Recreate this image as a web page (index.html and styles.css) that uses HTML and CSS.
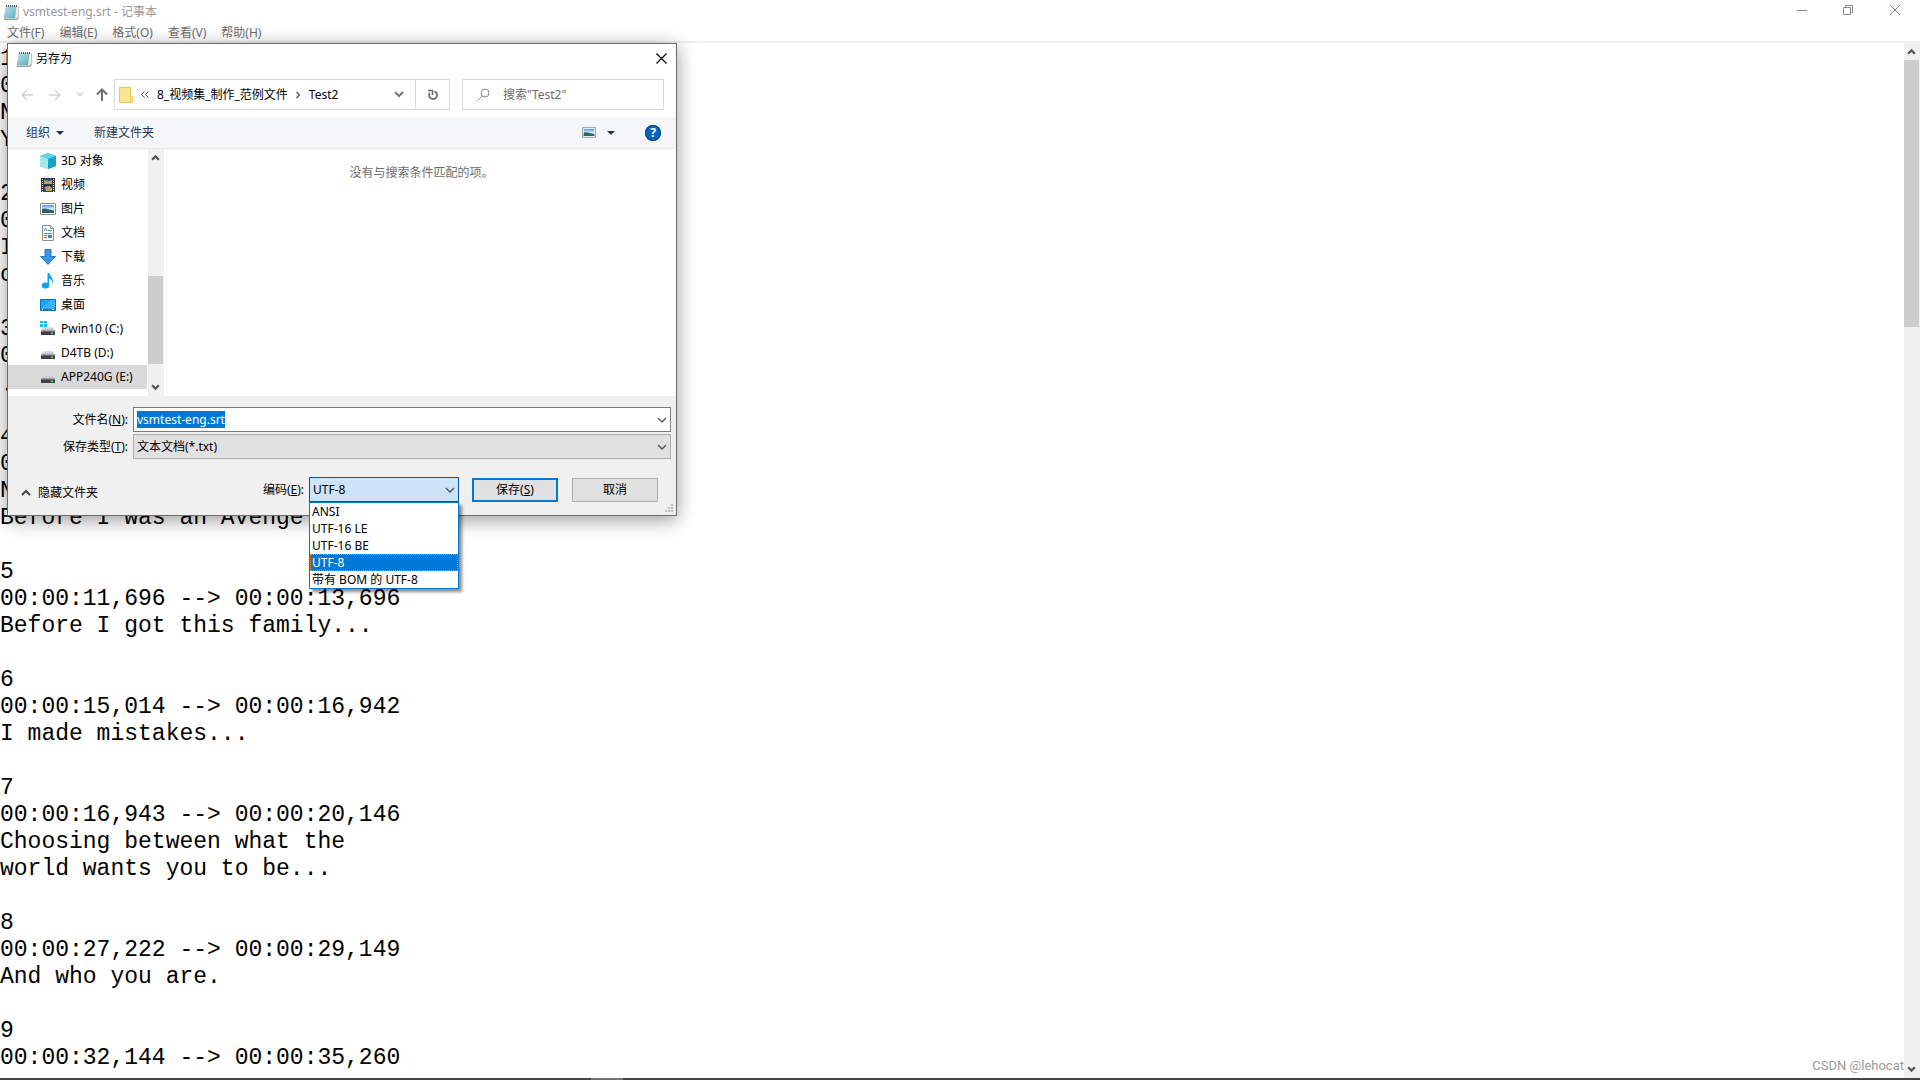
FILE: index.html
```
<!DOCTYPE html>
<html lang="zh-CN">
<head>
  <meta charset="UTF-8" />
  <meta name="viewport" content="width=device-width, initial-scale=1" />
  <title>vsmtest-eng.srt - 记事本</title>
  <link rel="stylesheet" href="styles.css">
</head>
<body>
  <!-- shared icons -->
  <svg class="sprite" width="0" height="0" aria-hidden="true">
    <defs>
      <linearGradient id="pad" x1="0" y1="0" x2="1" y2="1">
        <stop offset="0" stop-color="#c4e6ee" />
        <stop offset="1" stop-color="#57a9bd" />
      </linearGradient>
      <linearGradient id="sky" x1="0" y1="0" x2="0" y2="1">
        <stop offset="0" stop-color="#4f94ef" />
        <stop offset="0.5" stop-color="#d8f0fa" />
        <stop offset="1" stop-color="#2c6c78" />
      </linearGradient>
      <linearGradient id="disk" x1="0" y1="0" x2="0" y2="1">
        <stop offset="0" stop-color="#e2e2e4" />
        <stop offset="1" stop-color="#b5b6ba" />
      </linearGradient>
      <symbol id="notepad" viewBox="0 0 16 16">
        <path d="M3 2h12.500v12.500L13.500 16H1z" fill="#a89878" />
        <path d="M4 2h11v11l-2 2H2z" fill="#eceae2" />
        <path d="M3 2h10.500L12 14.500H.5z" fill="url(#pad)" />
        <path d="M3.200 5h9.500M2.800 8h9.500M2.300 11h9.500" stroke="#8cc9d6" stroke-width=".6" />
        <path d="M3.500 1v2M5.500 1v2M7.500 1v2M9.500 1v2M11.500 1v2M13.500 1v2" stroke="#53626a" />
      </symbol>
      <symbol id="chevron-up" viewBox="0 0 8 6"><path d="M1 5l3-3 3 3" fill="none" stroke="#555" stroke-width="2" /></symbol>
      <symbol id="chevron-down" viewBox="0 0 8 6"><path d="M1 1l3 3 3-3" fill="none" stroke="#555" stroke-width="2" /></symbol>
      <symbol id="thin-down" viewBox="0 0 10 6"><path d="M1 1l4 4 4-4" fill="none" stroke="#555" stroke-width="1.300" /></symbol>
      <symbol id="caret" viewBox="0 0 8 4"><path d="M0 0h8L4 4z" fill="#1e395b" /></symbol>
      <symbol id="picture" viewBox="0 0 16 12">
        <path d="M.5.5h15v11H.5z" fill="#fff" stroke="#8c8c8c" />
        <path d="M2 2h12v8H2z" fill="url(#sky)" />
        <path d="M2 6c3-1 5 0 12 2v2H2z" fill="#2a6265" />
      </symbol>
      <symbol id="drive" viewBox="0 0 16 16">
        <path d="M3.500 6h9L15 10H1z" fill="url(#disk)" />
        <path d="M1 10h14v4H1z" fill="#3f4145" />
        <path d="M1 9.500h14v1H1z" fill="#8b8d92" />
        <path d="M11 11.500h2v1.500h-2z" fill="#52e07a" />
      </symbol>
    </defs>
  </svg>

  <header class="title-bar">
    <svg class="icon"><use href="#notepad" /></svg>
    <h1 class="app-title">vsmtest-eng.srt - 记事本</h1>
    <div class="window-buttons">
      <button class="window-btn" aria-label="最小化">
        <svg width="10" height="10"><path d="M0 5.500h10" stroke="#888" /></svg>
      </button>
      <button class="window-btn" aria-label="还原">
        <svg width="10" height="10"><path d="M.5 2.500h7v7h-7zM2.500 2.500v-2h7v7h-2" fill="none" stroke="#888" /></svg>
      </button>
      <button class="window-btn" aria-label="关闭">
        <svg width="10" height="10"><path d="M0 0l10 10M10 0L0 10" stroke="#888" /></svg>
      </button>
    </div>
  </header>

  <nav class="menu-bar">
    <button class="menu-btn">文件(F)</button>
    <button class="menu-btn">编辑(E)</button>
    <button class="menu-btn">格式(O)</button>
    <button class="menu-btn">查看(V)</button>
    <button class="menu-btn">帮助(H)</button>
  </nav>

  <main class="editor">
    <div class="text">
      <p class="cue">1<br>0<br>N<br>Y</p>
      <p class="cue">2<br>0<br>I<br>c</p>
      <p class="cue">3<br>0<br><span class="note">♪</span></p>
      <p class="cue">4<br>0<br>N<br>Before I was an Avenge</p>
      <p class="cue">5<br>00:00:11,696 --&gt; 00:00:13,696<br>Before I got this family...</p>
      <p class="cue">6<br>00:00:15,014 --&gt; 00:00:16,942<br>I made mistakes...</p>
      <p class="cue">7<br>00:00:16,943 --&gt; 00:00:20,146<br>Choosing between what the<br>world wants you to be...</p>
      <p class="cue">8<br>00:00:27,222 --&gt; 00:00:29,149<br>And who you are.</p>
      <p class="cue">9<br>00:00:32,144 --&gt; 00:00:35,260</p>
    </div>
    <div class="scrollbar">
      <svg class="scroll-arrow"><use href="#chevron-up" /></svg>
      <div class="thumb editor-thumb"></div>
      <svg class="scroll-arrow"><use href="#chevron-down" /></svg>
    </div>
    <span class="watermark">CSDN @lehocat</span>
  </main>
  <footer class="taskbar"><div class="task-active"></div></footer>

  <section class="dialog" role="dialog" aria-labelledby="dialog-title">
    <div class="dialog-head">
      <svg class="icon"><use href="#notepad" /></svg>
      <h2 class="dialog-title" id="dialog-title">另存为</h2>
      <button class="close-btn" aria-label="关闭">
        <svg width="11" height="11"><path d="M.5.5l10 10M10.500.5l-10 10" stroke="#000" stroke-width="1.200" /></svg>
      </button>
    </div>

    <div class="path-row">
      <div class="arrows">
        <button class="plain-btn" aria-label="后退">
          <svg width="12" height="12"><path d="M12 6H1M6 1L1 6l5 5" fill="none" stroke="#d4d4d4" stroke-width="1.500" /></svg>
        </button>
        <button class="plain-btn" aria-label="前进">
          <svg width="12" height="12"><path d="M0 6h11M6 1l5 5-5 5" fill="none" stroke="#d4d4d4" stroke-width="1.500" /></svg>
        </button>
        <button class="plain-btn" aria-label="最近的位置">
          <svg width="6" height="5"><path d="M.5 1L3 3.500 5.500 1" fill="none" stroke="#ccc" stroke-width="1.300" /></svg>
        </button>
        <button class="plain-btn" aria-label="上移">
          <svg width="12" height="13"><path d="M6 13V1.500M1 6.500l5-5 5 5" fill="none" stroke="#6e6e6e" stroke-width="2" /></svg>
        </button>
      </div>
      <div class="address">
        <svg width="14" height="18"><path d="M.5 1.500h11v9h2v6H.5z" fill="#ffe48f" stroke="#ecc455" /><path d="M11.500 10.500v6" stroke="#f4cf67" /></svg>
        <svg width="8" height="7"><path d="M3.500.5l-3 3 3 3M7.500.5l-3 3 3 3" fill="none" stroke="#555" /></svg>
        <button class="crumb">8_视频集_制作_范例文件</button>
        <svg width="5" height="8"><path d="M.5 1l3 3-3 3" fill="none" stroke="#555" stroke-width="1.300" /></svg>
        <button class="crumb">Test2</button>
        <button class="address-drop" aria-label="以前的位置"><svg width="10" height="7"><path d="M1 1l4 4 4-4" fill="none" stroke="#777" stroke-width="2" /></svg></button>
        <button class="refresh" aria-label="刷新">
          <svg width="12" height="12"><path d="M7.500 2.400A4 4 0 1 1 2.800 3.800" fill="none" stroke="#6e6e6e" stroke-width="1.800" /><path d="M1 1.500h4.500v4.500" fill="none" stroke="#6e6e6e" stroke-width="1.600" /></svg>
        </button>
      </div>
      <label class="search">
        <svg width="13" height="13"><circle cx="8" cy="5" r="4" fill="none" stroke="#888" /><path d="M5 8L.5 12.500" stroke="#888" /></svg>
        <input class="search-input" type="search" placeholder='搜索"Test2"' aria-label="搜索">
      </label>
    </div>

    <div class="toolbar">
      <button class="tool-btn">组织 <svg width="8" height="4"><use href="#caret" /></svg></button>
      <button class="tool-btn">新建文件夹</button>
      <button class="tool-btn view-btn" aria-label="更改视图">
        <svg width="14" height="11"><use href="#picture" /></svg>
        <svg width="8" height="4"><use href="#caret" /></svg>
      </button>
      <button class="help-btn" aria-label="获取帮助">?</button>
    </div>

    <div class="browser">
      <ul class="places">
        <li class="place">
          <svg class="icon"><path d="M0 3l8-3 8 3v10l-8 3-8-3z" fill="#28b6d4" /><path d="M0 3l8-3 8 3-8 3z" fill="#5fd4e4" /><path d="M0 3l8 3v10l-8-3z" fill="#a5e8ef" /><path d="M8 6l8-3v10l-8 3z" fill="#12a5c8" /></svg>3D 对象
        </li>
        <li class="place">
          <svg class="icon"><path d="M1 1h14v14H1z" fill="#38383c" /><path d="M4 1h8v14H4z" fill="#274c87" /><path d="M4 3l5 1 3-1v4H4zM5 10l4-1 3 2v3H6z" fill="#e69a2e" /><path d="M7 4l3 1-1 3-3-2zM7 10l3 1-1 3z" fill="#4dbce5" /><path d="M4 8h8" stroke="#222" /><path d="M2.500 2v13M13.500 2v13" stroke="#e6e6e6" stroke-dasharray="1 1" /></svg>视频
        </li>
        <li class="place"><svg class="icon"><use href="#picture" /></svg>图片</li>
        <li class="place">
          <svg class="icon"><path d="M2.500.5h8l3 3v12h-11z" fill="#fff" stroke="#8b8b8b" /><path d="M10.500.5v3h3" fill="#eee" stroke="#8b8b8b" /><path d="M4 6l1.500-3L7 6M4 8.500h8M4 10.500h3M4 12.500h3M8 5.500h4" fill="none" stroke="#2f95c7" /><path d="M8 10h4v3H8z" fill="#4584a0" /></svg>文档
        </li>
        <li class="place">
          <svg class="icon"><path d="M5 .5h6v7h4.500L8 15.500.5 7.500H5z" fill="#3d94e4" stroke="#2377c5" /></svg>下载
        </li>
        <li class="place">
          <svg class="icon"><ellipse cx="5.500" cy="12.500" rx="3.700" ry="3" fill="#0c9df5" /><path d="M7.500 0h1.800c.3 3 4 4 3.600 8.500-.1 1-.5 2-1 2.500.8-3.500-.9-5-2.700-5.500v7H7.500z" fill="#0c9df5" /></svg>音乐
        </li>
        <li class="place">
          <svg class="icon"><path d="M.5 2.500h15v11H.5z" fill="#1ca3fb" stroke="#0873bd" /><path d="M1 12L11 3h4v9z" fill="#3db2ff" /><path d="M1 12.500h14" stroke="#0870b7" /><path d="M2 12.500h1M12 12.500h2" stroke="#fff" /></svg>桌面
        </li>
        <li class="place">
          <svg class="icon"><use href="#drive" /><path d="M0 0h3v2H0zM4 0h3v2H4zM0 3h3v3H0zM4 3h3v3H4z" fill="#19bce8" /></svg>Pwin10 (C:)
        </li>
        <li class="place"><svg class="icon"><use href="#drive" /></svg>D4TB (D:)</li>
        <li class="place selected"><svg class="icon"><use href="#drive" /></svg>APP240G (E:)</li>
      </ul>
      <div class="scrollbar">
        <svg class="scroll-arrow"><use href="#chevron-up" /></svg>
        <div class="thumb places-thumb"></div>
        <svg class="scroll-arrow"><use href="#chevron-down" /></svg>
      </div>
      <div class="files">没有与搜索条件匹配的项。</div>
    </div>

    <form class="save-form" onsubmit="return false">
      <label class="form-label" for="file-name">文件名(<u>N</u>):</label>
      <div class="field">
        <input class="control" id="file-name" type="text" value="vsmtest-eng.srt" spellcheck="false" autocomplete="off">
        <svg class="field-arrow"><use href="#thin-down" /></svg>
      </div>
      <label class="form-label" for="file-type">保存类型(<u>T</u>):</label>
      <div class="field">
        <select class="control gray" id="file-type"><option>文本文档(*.txt)</option></select>
        <svg class="field-arrow"><use href="#thin-down" /></svg>
      </div>
    </form>

    <div class="actions">
      <button class="plain-btn hide-folders"><svg width="10" height="7"><path d="M1 6l4-4 4 4" fill="none" stroke="#444" stroke-width="2" /></svg>隐藏文件夹</button>
      <label class="form-label" for="encoding">编码(<u>E</u>):</label>
      <div class="field encoding">
        <select class="control open" id="encoding"><option>UTF-8</option></select>
        <svg class="field-arrow"><use href="#thin-down" /></svg>
        <ul class="options" role="listbox" aria-label="编码">
          <li class="option" role="option">ANSI</li>
          <li class="option" role="option">UTF-16 LE</li>
          <li class="option" role="option">UTF-16 BE</li>
          <li class="option current" role="option" aria-selected="true">UTF-8</li>
          <li class="option" role="option">带有 BOM 的 UTF-8</li>
        </ul>
      </div>
      <button class="action-btn primary">保存(<u>S</u>)</button>
      <button class="action-btn">取消</button>
    </div>
    <svg class="grip" width="9" height="9"><path d="M6 1h2M3 4h2M6 4h2M0 7h2M3 7h2M6 7h2" stroke="#bcbcbc" stroke-width="2" /></svg>
  </section>

  <script>
    const fileName = document.getElementById('file-name');
    fileName.focus();
    fileName.select();
  </script>
</body>
</html>
```
FILE: styles.css
```
* {
  box-sizing: border-box;
  margin: 0;
  padding: 0;
}

html, body {
  height: 100%;
}

body {
  display: flex;
  flex-direction: column;
  overflow: hidden;
  position: relative;
  background: white;
  color: black;
  font: 12px/16px "Noto Sans", "Noto Sans CJK SC", sans-serif;
}

button, input, select {
  font: inherit;
  color: inherit;
  background: none;
  border: none;
  border-radius: 0;
  outline: none;
}

ul {
  list-style: none;
}

svg {
  display: block;
  flex-shrink: 0;
}

.sprite {
  position: absolute;
}

.icon {
  width: 16px;
  height: 16px;
}

/* notepad window */
.title-bar {
  display: flex;
  align-items: center;
  gap: 4px;
  height: 23px;
  padding-left: 3px;
  flex-shrink: 0;
}

.app-title {
  font-size: 12px;
  font-weight: normal;
  color: #999;
}

.window-buttons {
  display: flex;
  margin-left: auto;
  align-self: stretch;
}

.window-btn {
  display: flex;
  justify-content: center;
  align-items: center;
  width: 45px;
  height: 20px;
}

.window-btn:first-child {
  width: 46px;
}

.window-btn:last-child {
  width: 50px;
}

.menu-bar {
  display: flex;
  gap: 15px;
  height: 20px;
  padding-left: 7px;
  border-bottom: 2px solid #f0f0f0;
  flex-shrink: 0;
}

.menu-btn {
  padding-top: 2px;
  color: #6d6d6d;
  line-height: 16px;
}

.editor {
  display: flex;
  flex: 1;
  min-height: 0;
  position: relative;
}

.text {
  flex: 1;
  overflow: hidden;
  padding-top: 3px;
  font: 23px/27px "Liberation Mono", monospace;
}

.cue {
  width: max-content;
  margin-bottom: 27px;
}

.note {
  font-family: "Noto Sans CJK SC", sans-serif;
  line-height: 1px;
}

.scrollbar {
  display: flex;
  flex-direction: column;
  width: 16px;
  padding-right: 1px;
  background: #f0f0f0;
}

.scroll-arrow {
  width: 15px;
  height: 17px;
  padding: 5px 3px;
}

.scroll-arrow:last-child {
  margin-top: auto;
}

.thumb {
  background: #cdcdcd;
}

.editor-thumb {
  height: 267px;
}

.watermark {
  position: absolute;
  right: 16px;
  bottom: 4px;
  color: #999;
  font: 13px/16px Roboto, sans-serif;
}

.taskbar {
  height: 2px;
  background: #454343;
  flex-shrink: 0;
}

.task-active {
  width: 32px;
  height: 2px;
  margin-left: 591px;
  background: #747272;
}

/* save as dialog */
.dialog {
  position: absolute;
  left: 7px;
  top: 43px;
  width: 670px;
  display: flex;
  flex-direction: column;
  background: #f0f0f0;
  border: 1px solid #6b6b6b;
  box-shadow: 0 4px 18px rgba(0, 0, 0, 0.4);
}

.dialog-head {
  display: flex;
  align-items: center;
  gap: 4px;
  height: 29px;
  padding: 0 9px 0 8px;
  background: white;
}

.dialog-title {
  font-size: 12px;
  font-weight: normal;
}

.close-btn {
  margin-left: auto;
}

.path-row {
  display: flex;
  height: 44px;
  padding: 6px 12px 7px 13px;
  background: white;
}

.arrows {
  display: flex;
  align-items: center;
  gap: 16px;
  width: 93px;
}

.plain-btn:last-child {
  margin-left: -3px;
}

.address, .search {
  display: flex;
  align-items: center;
  border: 1px solid #d9d9d9;
}

.address {
  gap: 8px;
  width: 336px;
  margin-right: 12px;
  padding-left: 4px;
}

.address-drop {
  margin-left: auto;
  margin-right: 3px;
}

.refresh {
  display: flex;
  justify-content: center;
  align-items: center;
  align-self: stretch;
  width: 34px;
  border-left: 1px solid #d9d9d9;
}

.search {
  flex: 1;
  gap: 13px;
  padding-left: 14px;
}

.search-input {
  width: 140px;
}

.search-input::placeholder {
  color: #6d6d6d;
}

.toolbar {
  display: flex;
  align-items: center;
  gap: 30px;
  height: 32px;
  padding: 0 15px 0 18px;
  background: #f5f6f7;
  border-bottom: 1px solid #e8e9ea;
}

.tool-btn {
  display: flex;
  align-items: center;
  gap: 6px;
  color: #1e395b;
}

.view-btn {
  gap: 11px;
  margin-left: auto;
}

.help-btn {
  width: 16px;
  height: 16px;
  border-radius: 50%;
  background: #0067c5;
  box-shadow: 0 0 0 1px #17456f inset;
  color: white;
  font-size: 12px;
  font-weight: bold;
  line-height: 16px;
}

.browser {
  display: flex;
  height: 247px;
  background: white;
}

.places {
  width: 140px;
  overflow: hidden;
}

.place {
  display: flex;
  align-items: center;
  gap: 5px;
  height: 24px;
  padding-left: 32px;
  margin-right: 1px;
  white-space: nowrap;
}

.selected {
  background: #d9d9d9;
}

.places-thumb {
  height: 88px;
  margin-top: 110px;
}

.files {
  flex: 1;
  margin-left: 2px;
  padding-top: 16px;
  border-left: 1px solid #f5f5f5;
  color: #6d6d6d;
  text-align: center;
}

.save-form {
  display: grid;
  grid-template-columns: 120px 1fr;
  column-gap: 5px;
  row-gap: 2px;
  padding: 11px 5px 0 0;
}

.form-label {
  line-height: 25px;
  text-align: right;
}

.field {
  position: relative;
}

.control {
  display: block;
  appearance: none;
  width: 100%;
  height: 25px;
  padding: 0 20px 0 3px;
  background: white;
  border: 1px solid #7a7a7a;
}

.control::selection {
  background: #0078d7;
  color: white;
}

.gray {
  background: #e1e1e1;
  border-color: #adadad;
}

.open {
  background: #cce4f7;
  border-color: #00549a;
}

.field-arrow {
  position: absolute;
  right: 4px;
  top: 10px;
  width: 10px;
  height: 6px;
  pointer-events: none;
}

.actions {
  display: flex;
  align-items: center;
  padding: 18px 18px 13px 13px;
}

.hide-folders {
  display: flex;
  align-items: center;
  gap: 7px;
  padding-top: 6px;
  margin-right: auto;
}

.encoding {
  width: 150px;
  margin: 0 13px 0 5px;
}

.options {
  position: absolute;
  left: 0;
  right: 0;
  top: 100%;
  background: white;
  border: 1px solid #0078d7;
  box-shadow: 3px 3px 3px rgba(0, 0, 0, 0.45);
}

.option {
  padding-left: 2px;
  line-height: 17px;
  height: 17px;
}

.current {
  background: #0078d7;
  color: white;
  outline: 1px dotted #f08a30;
  outline-offset: -1px;
}

.action-btn {
  width: 86px;
  height: 24px;
  background: #e1e1e1;
  border: 1px solid #adadad;
}

.primary {
  margin-right: 14px;
  border: 2px solid #0078d7;
}

.grip {
  position: absolute;
  right: 2px;
  bottom: 2px;
}
```
